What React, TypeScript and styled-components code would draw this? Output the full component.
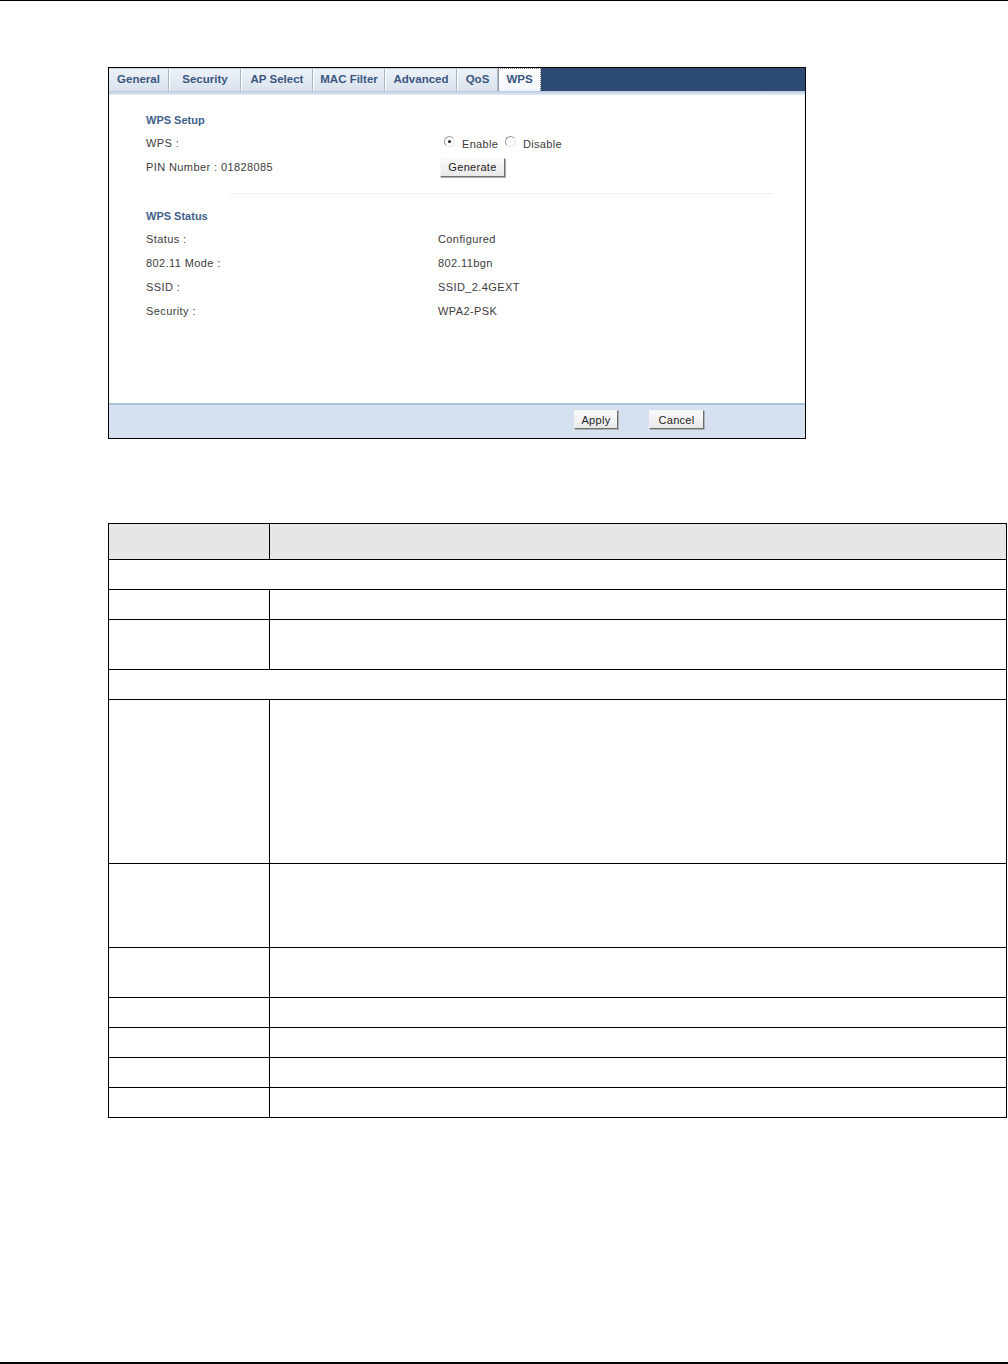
import React from 'react';
import styled, { createGlobalStyle } from 'styled-components';

const tabs = [
  { label: 'General', width: 60 },
  { label: 'Security', width: 72 },
  { label: 'AP Select', width: 72 },
  { label: 'MAC Filter', width: 72 },
  { label: 'Advanced', width: 72 },
  { label: 'QoS', width: 41 },
  { label: 'WPS', width: 43, active: true },
];

const statusRows = [
  ['Status :', 'Configured'],
  ['802.11 Mode :', '802.11bgn'],
  ['SSID :', 'SSID_2.4GEXT'],
  ['Security :', 'WPA2-PSK'],
];

// heights of the description table rows; span = one cell across both columns
const tableRows = [
  { h: 30, span: true },
  { h: 30 },
  { h: 50 },
  { h: 30, span: true },
  { h: 164 },
  { h: 84 },
  { h: 50 },
  { h: 30 },
  { h: 30 },
  { h: 30 },
  { h: 30 },
];

export default function App() {
  return (
    <PAGE>
      <GlobalStyle />
      <RULE />
      <BODY>
        <FIGURE>
          <TAB_BAR>
            {tabs.map((tab) => (
              <TAB key={tab.label} $width={tab.width} $active={!!tab.active}>
                {tab.label}
              </TAB>
            ))}
            <TAB_FILL />
          </TAB_BAR>
          <TAB_UNDERLINE />
          <CONTENT>
            <SECTION_TITLE>WPS Setup</SECTION_TITLE>
            <FORM_ROW>
              <LABEL>WPS :</LABEL>
              <RADIO_GROUP>
                <RADIO $checked />
                <span>Enable</span>
                <RADIO $checked={false} />
                <span>Disable</span>
              </RADIO_GROUP>
            </FORM_ROW>
            <FORM_ROW>
              <LABEL>PIN Number : 01828085</LABEL>
              <div>
                <SMALL_BTN $w={65} $ml={2}>Generate</SMALL_BTN>
              </div>
            </FORM_ROW>
            <SEPARATOR />
            <SECTION_TITLE>WPS Status</SECTION_TITLE>
            {statusRows.map(([label, value]) => (
              <FORM_ROW key={label}>
                <LABEL>{label}</LABEL>
                <LABEL>{value}</LABEL>
              </FORM_ROW>
            ))}
          </CONTENT>
          <FOOTER>
            <SMALL_BTN $w={44}>Apply</SMALL_BTN>
            <SMALL_BTN $w={55}>Cancel</SMALL_BTN>
          </FOOTER>
        </FIGURE>

        <TABLE>
          <tbody>
            <tr>
              <HEAD_CELL $h={36} $first />
              <HEAD_CELL $h={36} />
            </tr>
            {tableRows.map((row, i) =>
              row.span ? (
                <tr key={i}>
                  <CELL colSpan={2} $h={row.h} />
                </tr>
              ) : (
                <tr key={i}>
                  <CELL $h={row.h} $first />
                  <CELL $h={row.h} />
                </tr>
              )
            )}
          </tbody>
        </TABLE>
      </BODY>
      <BOTTOM_RULE />
    </PAGE>
  );
}

const GlobalStyle = createGlobalStyle`
  html, body {
    margin: 0;
    padding: 0;
    background: #fff;
  }
  body {
    font-family: 'Liberation Sans', Arial, sans-serif;
  }
`;

const PAGE = styled.div`
  width: 1008px;
  height: 1364px;
  display: flex;
  flex-direction: column;
`;

const RULE = styled.div`
  height: 1px;
  background: #000;
`;

const BOTTOM_RULE = styled.div`
  height: 2px;
  background: #000;
  margin-top: auto;
`;

const BODY = styled.div`
  padding-left: 108px;
  padding-top: 66px;
`;

const FIGURE = styled.div`
  width: 696px;
  height: 370px;
  border: 1px solid #000;
  display: flex;
  flex-direction: column;
  background: #fff;
  font-size: 11px;
  color: #3c3c3c;
`;

const TAB_BAR = styled.div`
  display: flex;
  height: 23px;
  background: #fff;
`;

const TAB = styled.div<{ $width: number; $active: boolean }>`
  width: ${({ $width }) => $width}px;
  box-sizing: border-box;
  display: flex;
  align-items: center;
  justify-content: center;
  padding-bottom: 3px;
  font-size: 11.5px;
  font-weight: 700;
  color: #3a5680;
  background: ${({ $active }) =>
    $active ? 'linear-gradient(#ffffff, #f3f6fb)' : 'linear-gradient(#eef2f8, #d9e2ee)'};
  border-left: 1px solid ${({ $active }) => ($active ? '#9a9a9a' : '#ffffff')};
  border-right: 1px ${({ $active }) => ($active ? 'dotted #777' : 'solid #a9b6c8')};
  border-top: 1px ${({ $active }) => ($active ? 'dotted #777' : 'solid #c8d2e0')};
  &:first-child {
    border-left: none;
  }
`;

const TAB_FILL = styled.div`
  flex: 1;
  background: #2d4a72;
`;

const TAB_UNDERLINE = styled.div`
  height: 4px;
  background: linear-gradient(#b7c7dc, #e6edf6);
`;

const CONTENT = styled.div`
  flex: 1;
  padding: 14px 0 0 37px;
`;

const SECTION_TITLE = styled.div`
  font-size: 11px;
  font-weight: 700;
  color: #3f5f8d;
  height: 22px;
  line-height: 22px;
`;

const FORM_ROW = styled.div`
  display: grid;
  grid-template-columns: 292px 1fr;
  align-items: center;
  height: 24px;
`;

const LABEL = styled.div`
  color: #3c3c3c;
  letter-spacing: 0.4px;
`;

const RADIO_GROUP = styled.div`
  display: flex;
  align-items: center;
  gap: 4px;
  padding-left: 6px;
  padding-top: 2px;
  letter-spacing: 0.3px;
  & > span {
    margin-right: 3px;
  }
`;

const RADIO = styled.span<{ $checked: boolean }>`
  width: 11px;
  height: 11px;
  border-radius: 50%;
  box-sizing: border-box;
  border: 1px solid #9a9a9a;
  border-right-color: #e6e6e6;
  border-bottom-color: #e6e6e6;
  background: #fff;
  position: relative;
  margin-top: -5px;
  &::after {
    content: '';
    display: ${({ $checked }) => ($checked ? 'block' : 'none')};
    position: absolute;
    left: 3px;
    top: 3px;
    width: 3px;
    height: 3px;
    border-radius: 50%;
    background: #222;
  }
`;

const SMALL_BTN = styled.button<{ $w: number; $ml?: number }>`
  font-family: 'Liberation Sans', Arial, sans-serif;
  font-size: 11px;
  letter-spacing: 0.3px;
  color: #222;
  height: 19px;
  width: ${({ $w }) => $w}px;
  padding: 0;
  margin-left: ${({ $ml }) => $ml ?? 0}px;
  background: linear-gradient(#fbfbfb, #e8e8e8);
  border: 1px solid;
  border-color: #f4f4f4 #6e6e6e #6e6e6e #f4f4f4;
  box-shadow: 1px 1px 0 #b0b0b0;
`;

const SEPARATOR = styled.div`
  height: 1px;
  background: #eeeeee;
  margin: 14px 32px 11px 84px;
`;

const FOOTER = styled.div`
  height: 35px;
  flex-shrink: 0;
  border-top: 2px solid #a8bedb;
  background: #d5e1f1;
  display: flex;
  align-items: flex-start;
  padding-top: 5px;
  box-sizing: border-box;
  padding-left: 465px;
  gap: 31px;
`;

const TABLE = styled.table`
  margin-top: 84px;
  width: 899px;
  border-collapse: collapse;
  table-layout: fixed;
`;

const CELL = styled.td<{ $h: number; $first?: boolean }>`
  height: ${({ $h }) => $h - 1}px;
  border: 1.4px solid #000;
  padding: 0;
  width: ${({ $first }) => ($first ? '160px' : 'auto')};
`;

const HEAD_CELL = styled(CELL)`
  background: #e6e6e6;
`;
